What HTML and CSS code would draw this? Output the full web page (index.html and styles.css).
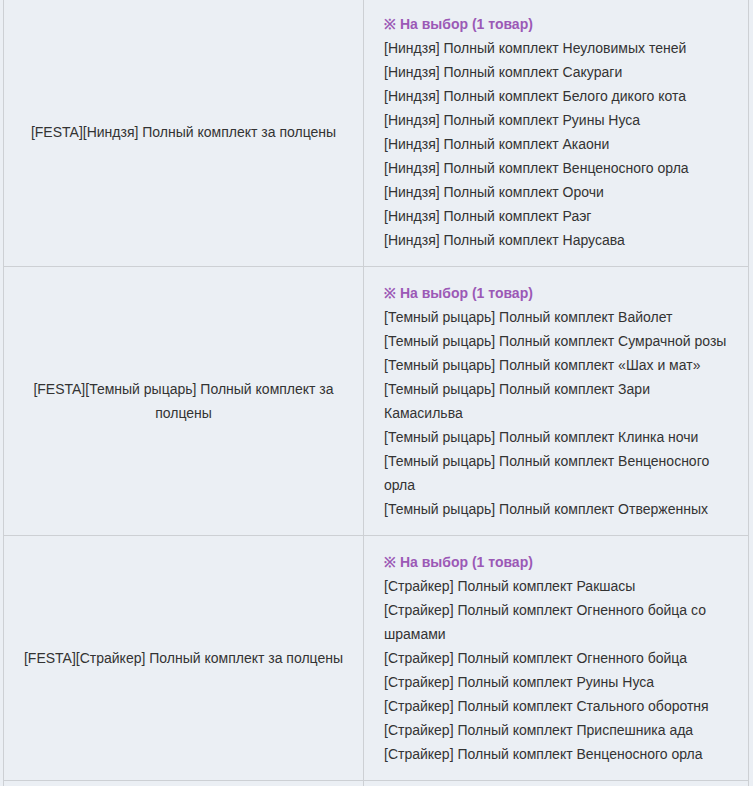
FILE: index.html
```html
<!DOCTYPE html>
<html lang="ru">
<head>
    <meta charset="UTF-8">
    <meta name="viewport" content="width=device-width, initial-scale=1.0">
    <title>Комплекты за полцены</title>
    <link rel="stylesheet" href="styles.css">
</head>
<body>
    <table class="sets">
        <colgroup>
            <col class="col-name">
            <col class="col-items">
        </colgroup>
        <tr>
            <td class="name">[FESTA][Ниндзя] Полный комплект за полцены</td>
            <td class="items">
                <p class="pick">※ На выбор (1 товар)</p>
                <p>[Ниндзя] Полный комплект Неуловимых теней</p>
                <p>[Ниндзя] Полный комплект Сакураги</p>
                <p>[Ниндзя] Полный комплект Белого дикого кота</p>
                <p>[Ниндзя] Полный комплект Руины Нуса</p>
                <p>[Ниндзя] Полный комплект Акаони</p>
                <p>[Ниндзя] Полный комплект Венценосного орла</p>
                <p>[Ниндзя] Полный комплект Орочи</p>
                <p>[Ниндзя] Полный комплект Раэг</p>
                <p>[Ниндзя] Полный комплект Нарусава</p>
            </td>
        </tr>
        <tr>
            <td class="name">[FESTA][Темный рыцарь] Полный комплект за полцены</td>
            <td class="items">
                <p class="pick">※ На выбор (1 товар)</p>
                <p>[Темный рыцарь] Полный комплект Вайолет</p>
                <p>[Темный рыцарь] Полный комплект Сумрачной розы</p>
                <p>[Темный рыцарь] Полный комплект «Шах и мат»</p>
                <p>[Темный рыцарь] Полный комплект Зари Камасильва</p>
                <p>[Темный рыцарь] Полный комплект Клинка ночи</p>
                <p>[Темный рыцарь] Полный комплект Венценосного орла</p>
                <p>[Темный рыцарь] Полный комплект Отверженных</p>
            </td>
        </tr>
        <tr>
            <td class="name">[FESTA][Страйкер] Полный комплект за полцены</td>
            <td class="items">
                <p class="pick">※ На выбор (1 товар)</p>
                <p>[Страйкер] Полный комплект Ракшасы</p>
                <p>[Страйкер] Полный комплект Огненного бойца со шрамами</p>
                <p>[Страйкер] Полный комплект Огненного бойца</p>
                <p>[Страйкер] Полный комплект Руины Нуса</p>
                <p>[Страйкер] Полный комплект Стального оборотня</p>
                <p>[Страйкер] Полный комплект Приспешника ада</p>
                <p>[Страйкер] Полный комплект Венценосного орла</p>
            </td>
        </tr>
        <tr class="more">
            <td class="name"></td>
            <td class="items"></td>
        </tr>
    </table>
</body>
</html>
```

FILE: styles.css
```css
body {
    font-family: "Liberation Sans", Arial, sans-serif;
    font-size: 14px;
    line-height: 24px;
    color: #333;
    background-color: #ebeff4;
    margin: 0;
    padding: 0;
}
.sets {
    border-collapse: collapse;
    table-layout: fixed;
    width: 746px;
    margin: -3px 0 0 3px;
}
.col-name {
    width: 360px;
}
.sets td {
    border: 1px solid #cdd0d4;
    padding: 14px 20px;
    vertical-align: middle;
}
.sets td.name {
    text-align: center;
    padding-left: 14px;
    padding-right: 14px;
}
.items {
    text-align: left;
}
.items p {
    margin: 0;
}
.pick {
    color: #9b59b6;
    font-weight: bold;
}
.more td {
    height: 40px;
}
```
